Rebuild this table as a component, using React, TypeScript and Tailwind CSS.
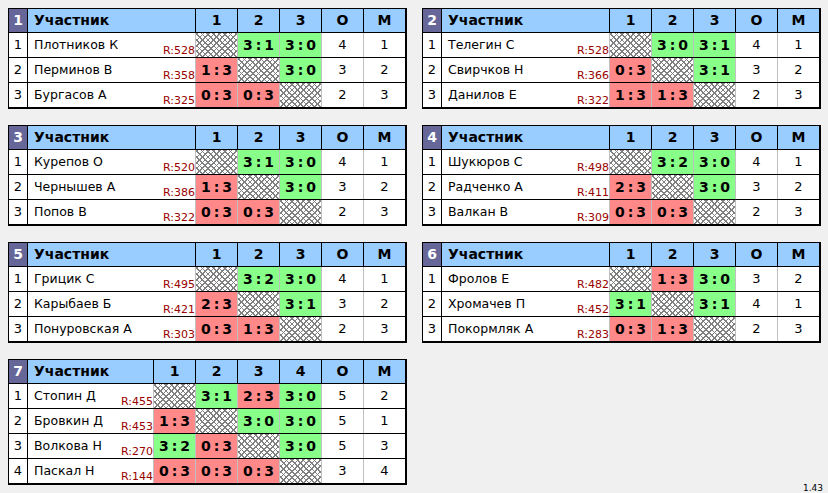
type Row = { name: string; r: number; res: (string | null)[]; o: number; m: number };
type Group = { n: number; rows: Row[] };

const groups: Group[] = [
  {
    n: 1,
    rows: [
      { name: 'Плотников К', r: 528, res: [null, '3:1', '3:0'], o: 4, m: 1 },
      { name: 'Перминов В', r: 358, res: ['1:3', null, '3:0'], o: 3, m: 2 },
      { name: 'Бургасов А', r: 325, res: ['0:3', '0:3', null], o: 2, m: 3 },
    ],
  },
  {
    n: 2,
    rows: [
      { name: 'Телегин С', r: 528, res: [null, '3:0', '3:1'], o: 4, m: 1 },
      { name: 'Свирчков Н', r: 366, res: ['0:3', null, '3:1'], o: 3, m: 2 },
      { name: 'Данилов Е', r: 322, res: ['1:3', '1:3', null], o: 2, m: 3 },
    ],
  },
  {
    n: 3,
    rows: [
      { name: 'Курепов О', r: 520, res: [null, '3:1', '3:0'], o: 4, m: 1 },
      { name: 'Чернышев А', r: 386, res: ['1:3', null, '3:0'], o: 3, m: 2 },
      { name: 'Попов В', r: 322, res: ['0:3', '0:3', null], o: 2, m: 3 },
    ],
  },
  {
    n: 4,
    rows: [
      { name: 'Шукюров С', r: 498, res: [null, '3:2', '3:0'], o: 4, m: 1 },
      { name: 'Радченко А', r: 411, res: ['2:3', null, '3:0'], o: 3, m: 2 },
      { name: 'Валкан В', r: 309, res: ['0:3', '0:3', null], o: 2, m: 3 },
    ],
  },
  {
    n: 5,
    rows: [
      { name: 'Грицик С', r: 495, res: [null, '3:2', '3:0'], o: 4, m: 1 },
      { name: 'Карыбаев Б', r: 421, res: ['2:3', null, '3:1'], o: 3, m: 2 },
      { name: 'Понуровская А', r: 303, res: ['0:3', '1:3', null], o: 2, m: 3 },
    ],
  },
  {
    n: 6,
    rows: [
      { name: 'Фролов Е', r: 482, res: [null, '1:3', '3:0'], o: 3, m: 2 },
      { name: 'Хромачев П', r: 452, res: ['3:1', null, '3:1'], o: 4, m: 1 },
      { name: 'Покормляк А', r: 283, res: ['0:3', '1:3', null], o: 2, m: 3 },
    ],
  },
  {
    n: 7,
    rows: [
      { name: 'Стопин Д', r: 455, res: [null, '3:1', '2:3', '3:0'], o: 5, m: 2 },
      { name: 'Бровкин Д', r: 453, res: ['1:3', null, '3:0', '3:0'], o: 5, m: 1 },
      { name: 'Волкова Н', r: 270, res: ['3:2', '0:3', null, '3:0'], o: 5, m: 3 },
      { name: 'Паскал Н', r: 144, res: ['0:3', '0:3', '0:3', null], o: 3, m: 4 },
    ],
  },
];

function ScoreCell({ value }: { value: string | null }) {
  if (!value) {
    // played-against-self cell, crosshatched
    return (
      <div className="w-[42px] border-l border-[#c0c0c0] bg-white bg-[repeating-linear-gradient(45deg,#808080_0_1px,transparent_1px_4px),repeating-linear-gradient(-45deg,#808080_0_1px,transparent_1px_4px)]" />
    );
  }
  const [a, b] = value.split(':').map(Number);
  return (
    <div
      className={`w-[42px] border-l border-[#c0c0c0] flex items-center justify-center pl-[3px] font-bold text-[14px] tracking-[3px] ${
        a > b ? 'bg-[#88ff88]' : 'bg-[#ff8888]'
      }`}
    >
      {value}
    </div>
  );
}

function GroupTable({ group }: { group: Group }) {
  const wide = group.rows.length === 4;
  const nameW = wide ? 'w-[126px]' : 'w-[168px]';

  return (
    <div className="border-l border-t border-r-2 border-b-2 border-black bg-white text-[13px] text-black">
      {/* header */}
      <div className="flex h-[24px] border-b border-black bg-[#99ccff] font-bold text-[14px]">
        <div className="w-[18px] bg-[#666699] text-white flex items-center justify-center">{group.n}</div>
        <div className={`${nameW} border-l border-black pl-[6px] flex items-center`}>Участник</div>
        {group.rows.map((_, i) => (
          <div key={i} className="w-[42px] border-l border-black flex items-center justify-center">
            {i + 1}
          </div>
        ))}
        <div className="w-[42px] border-l border-black flex items-center justify-center">О</div>
        <div className="w-[42px] border-l border-black flex items-center justify-center">М</div>
      </div>

      {group.rows.map((row, i) => {
        const last = i === group.rows.length - 1;
        return (
          <div key={i} className={`flex ${last ? 'h-[24px]' : 'h-[25px] border-b border-black'}`}>
            <div className="w-[18px] flex items-center justify-center">{i + 1}</div>
            <div className={`${nameW} border-l border-black pl-[6px] flex justify-between`}>
              <span className="self-center text-[12.5px]">{row.name}</span>
              <span className="self-end text-[11px] leading-[13px] text-[#990000]">R:{row.r}</span>
            </div>
            {row.res.map((v, j) => (
              <ScoreCell key={j} value={v} />
            ))}
            <div className="w-[42px] border-l border-[#c0c0c0] flex items-center justify-center">{row.o}</div>
            <div className="w-[42px] border-l border-[#c0c0c0] flex items-center justify-center">{row.m}</div>
          </div>
        );
      })}
    </div>
  );
}

export default function App() {
  return (
    <div className="h-[493px] w-full bg-[#f0f0f0] font-['DejaVu_Sans',sans-serif] overflow-hidden">
      <div className="grid grid-cols-[399px_399px] gap-x-[15px] gap-y-4 pt-2 pl-2">
        {groups.map((g) => (
          <GroupTable key={g.n} group={g} />
        ))}
      </div>
      <div className="text-right pr-[5px] text-[9px] leading-[9px] -mt-[1px]">1.43</div>
    </div>
  );
}
